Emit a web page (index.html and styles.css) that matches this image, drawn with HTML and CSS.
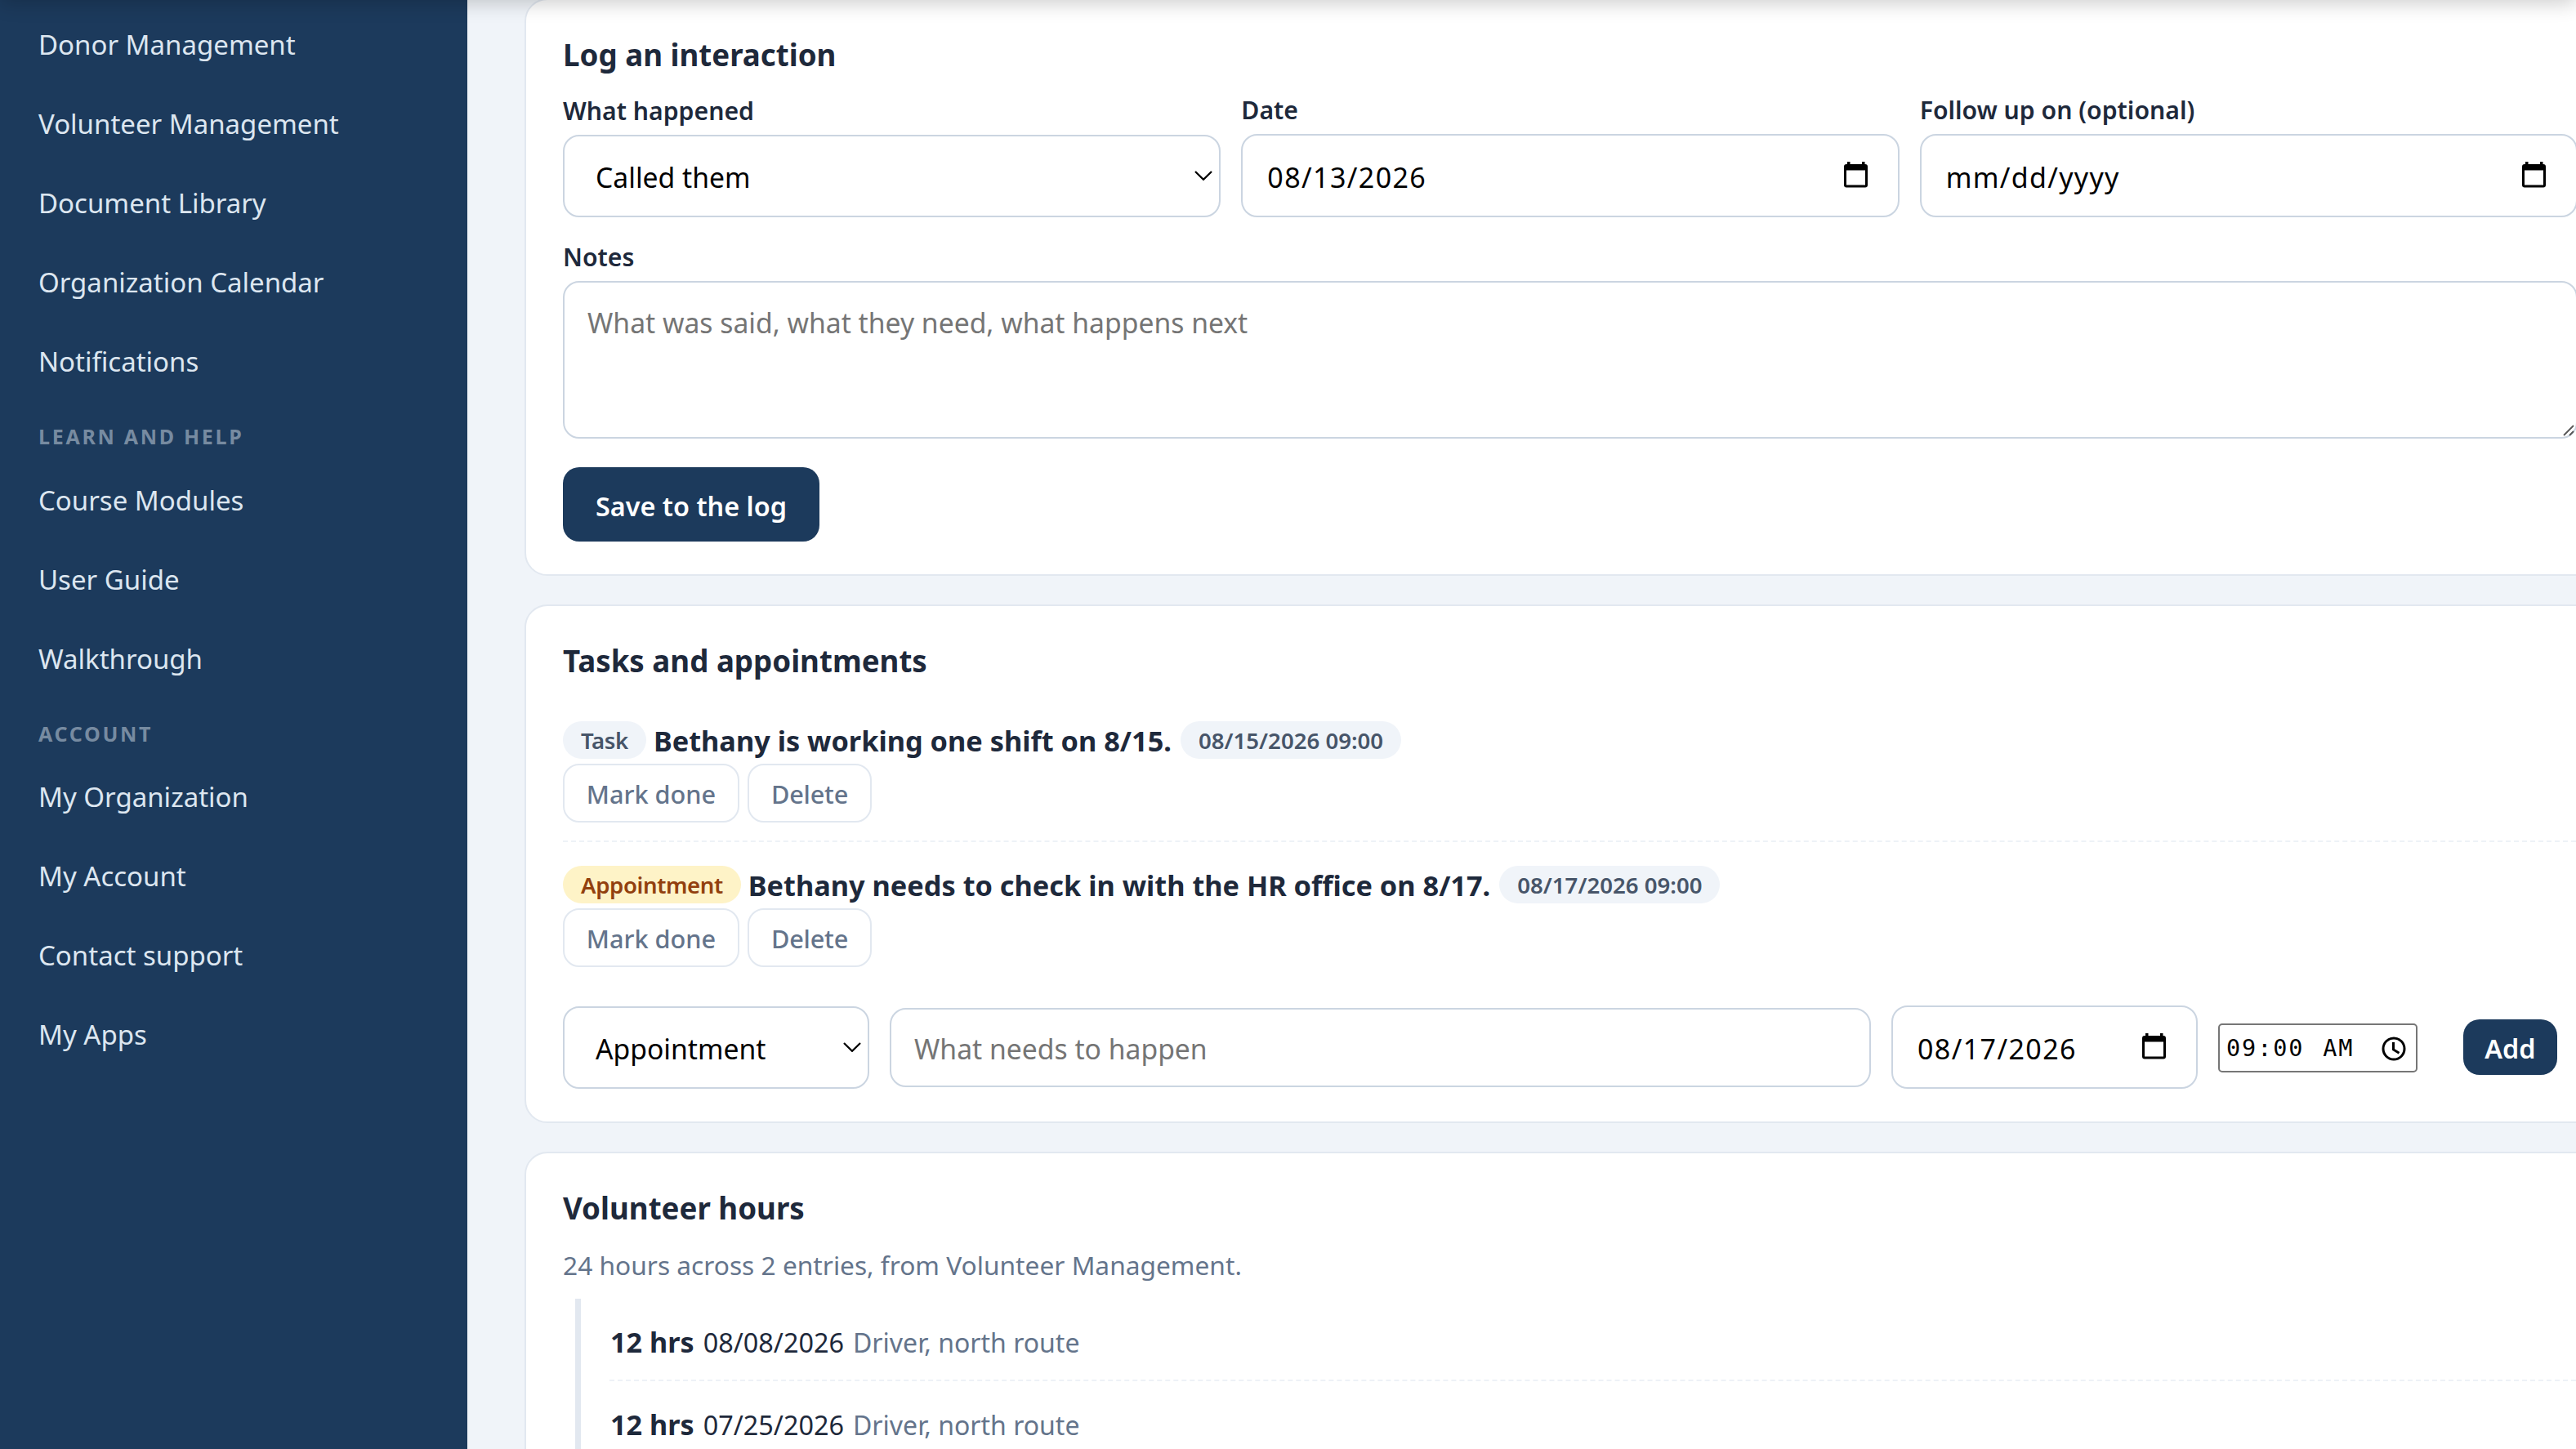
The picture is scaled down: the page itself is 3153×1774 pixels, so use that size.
FILE: index.html
```html
<!DOCTYPE html>
<html lang="en">
<head>
    <meta charset="UTF-8">
    <meta name="viewport" content="width=device-width, initial-scale=1.0">
    <title>Donor Record</title>
    <link rel="stylesheet" href="styles.css">
</head>
<body>
    <div class="topbar"></div>

    <!-- Shared icons -->
    <svg class="sprite">
        <symbol id="calendar" viewBox="0 0 29 32">
            <path d="M4 0h3.500v3H4zM22 0h3.500v3H22z"/>
            <path fill-rule="evenodd" d="M3 3h23a3 3 0 0 1 3 3v22.500a3 3 0 0 1-3 3H3a3 3 0 0 1-3-3V6a3 3 0 0 1 3-3zM3 10.500V28.500H26V10.500z"/>
        </symbol>
        <symbol id="chevron" viewBox="0 0 22 12">
            <path d="M1 1l10 9.800L21 1" fill="none" stroke="#000" stroke-width="2.300"/>
        </symbol>
    </svg>

    <div class="layout">
        <nav class="sidebar">
            <a>Donor Management</a>
            <a>Volunteer Management</a>
            <a>Document Library</a>
            <a>Organization Calendar</a>
            <a>Notifications</a>
            <div class="nav-section">LEARN AND HELP</div>
            <a>Course Modules</a>
            <a>User Guide</a>
            <a>Walkthrough</a>
            <div class="nav-section">ACCOUNT</div>
            <a>My Organization</a>
            <a>My Account</a>
            <a>Contact support</a>
            <a>My Apps</a>
        </nav>

        <main class="content">
            <!-- Log an interaction -->
            <section class="card">
                <h2>Log an interaction</h2>
                <div class="form-grid">
                    <div>
                        <label>What happened</label>
                        <div class="field select">Called them<svg class="chevron"><use href="#chevron"/></svg></div>
                    </div>
                    <div>
                        <label>Date</label>
                        <div class="field date"><span>08/13/2026</span><svg class="calendar"><use href="#calendar"/></svg></div>
                    </div>
                    <div>
                        <label>Follow up on (optional)</label>
                        <div class="field date"><span class="empty">mm/dd/yyyy</span><svg class="calendar"><use href="#calendar"/></svg></div>
                    </div>
                </div>
                <label for="notes">Notes</label>
                <div class="notes">
                    <textarea id="notes" placeholder="What was said, what they need, what happens next"></textarea>
                    <svg class="grip" viewBox="0 0 14 14"><path d="M1 13L13 1M8 13l5-5" stroke="#555" stroke-width="1.800"/></svg>
                </div>
                <button class="btn btn-save">Save to the log</button>
            </section>

            <!-- Tasks and appointments -->
            <section class="card">
                <h2>Tasks and appointments</h2>
                <div class="task">
                    <div class="task-line">
                        <span class="badge badge-type">Task</span>
                        <strong>Bethany is working one shift on 8/15.</strong>
                        <span class="badge">08/15/2026 09:00</span>
                    </div>
                    <div class="task-actions">
                        <button class="btn-ghost">Mark done</button>
                        <button class="btn-ghost">Delete</button>
                    </div>
                </div>
                <div class="task">
                    <div class="task-line">
                        <span class="badge badge-type badge-appt">Appointment</span>
                        <strong>Bethany needs to check in with the HR office on 8/17.</strong>
                        <span class="badge">08/17/2026 09:00</span>
                    </div>
                    <div class="task-actions">
                        <button class="btn-ghost">Mark done</button>
                        <button class="btn-ghost">Delete</button>
                    </div>
                </div>
                <div class="add-row">
                    <div class="field select">Appointment<svg class="chevron"><use href="#chevron"/></svg></div>
                    <input type="text" placeholder="What needs to happen">
                    <div class="field date"><span>08/17/2026</span><svg class="calendar"><use href="#calendar"/></svg></div>
                    <div class="time">
                        <span>09</span>:<span>00</span><span class="ampm">AM</span>
                        <svg class="clock" viewBox="0 0 30 30"><circle cx="15" cy="15" r="13"/><path d="M14.500 7v9l7 4.300"/></svg>
                    </div>
                    <button class="btn btn-add">Add</button>
                </div>
            </section>

            <!-- Volunteer hours -->
            <section class="card">
                <h2>Volunteer hours</h2>
                <p class="muted">24 hours across 2 entries, from Volunteer Management.</p>
                <div class="timeline">
                    <div class="entry"><strong>12 hrs</strong><span>08/08/2026</span><span class="role">Driver, north route</span></div>
                    <div class="entry"><strong>12 hrs</strong><span>07/25/2026</span><span class="role">Driver, north route</span></div>
                </div>
            </section>
        </main>
    </div>
</body>
</html>
```
FILE: styles.css
```css
* {
    box-sizing: border-box;
}

html, body {
    height: 100%;
}

body {
    margin: 0;
    overflow: hidden;
    font-family: "Noto Sans", "Open Sans", sans-serif;
    font-size: 33.6px;
    color: #1e293b;
    background-color: #f0f4f9;
}

.topbar {
    position: fixed;
    top: -60px;
    left: 0;
    right: 0;
    height: 60px;
    box-shadow: 0 4px 24px rgba(0, 0, 0, 0.2);
    z-index: 10;
}

.sprite {
    position: absolute;
    width: 0;
    height: 0;
}

.layout {
    display: flex;
    height: 1774px;
    overflow: hidden;
}

/* Sidebar */
.sidebar {
    flex: 0 0 572px;
    padding-top: 6px;
    background-color: #1c3a5c;
}

.sidebar a {
    display: block;
    padding-left: 47px;
    font-size: 33px;
    line-height: 97px;
    color: #dce6f0;
}

.nav-section {
    height: 72.5px;
    padding: 15px 0 0 47px;
    font-size: 25px;
    font-weight: 700;
    line-height: 56px;
    letter-spacing: 2.7px;
    color: #778ba1;
}

/* Cards */
.content {
    flex: none;
    width: 2560px;
    margin-top: -2px;
    padding-left: 70px;
}

.card {
    width: 2558px;
    margin-bottom: 35px;
    padding: 42px 45px 40px;
    background-color: #ffffff;
    border: 2px solid #e2e8f0;
    border-radius: 28px;
}

h2 {
    margin: 0;
    font-size: 36.7px;
    line-height: 50px;
}

label {
    display: block;
    margin-bottom: 9px;
    font-size: 30.2px;
    font-weight: 600;
    line-height: 40px;
}

.form-grid {
    display: grid;
    grid-template-columns: repeat(3, 1fr);
    gap: 25px;
    align-items: end;
    width: 2466px;
    margin: 23px 0 29px;
}

.field, textarea, input {
    border: 2px solid #cbd5e1;
    border-radius: 20px;
    background-color: #ffffff;
    font-family: inherit;
    font-size: 33.7px;
}

.field {
    display: flex;
    align-items: center;
    justify-content: space-between;
    color: #000000;
}

.select {
    height: 101px;
    padding: 3px 8px 0 38px;
}

.date {
    height: 102px;
    padding: 4px 37px 0 30px;
}

.date span {
    font-size: 34px;
    letter-spacing: 1.4px;
}

.date .empty {
    letter-spacing: 1.3px;
}

.chevron {
    width: 22px;
    height: 12px;
    margin-bottom: 4px;
}

.calendar {
    width: 29px;
    height: 32px;
    margin-bottom: 7px;
}

.notes {
    position: relative;
    width: 2466px;
    height: 193px;
}

textarea {
    width: 100%;
    height: 193px;
    padding: 26px 28px;
    line-height: 46px;
    resize: none;
}

::placeholder {
    color: #757575;
}

.grip {
    position: absolute;
    right: 4px;
    bottom: 3px;
    width: 14px;
    height: 14px;
}

.btn {
    display: block;
    height: 91px;
    padding: 2px 0 0;
    border: none;
    border-radius: 20px;
    background-color: #1c3a5c;
    color: #ffffff;
    font-family: inherit;
    font-size: 32.4px;
    font-weight: 600;
}

.btn-save {
    width: 314px;
    margin-top: 35px;
}

/* Tasks */
h2 + .task {
    margin-top: 20px;
}

.task {
    padding: 29px 0 22px;
}

.task + .task {
    border-top: 2px dashed #eef2f7;
}

.task-line {
    display: flex;
    align-items: center;
    height: 46px;
}

.task-line strong {
    margin: 0 11px 0 9px;
    font-size: 34.3px;
}

.badge {
    padding: 0 22px;
    border-radius: 23px;
    background-color: #f0f4f9;
    color: #475569;
    font-size: 27.6px;
    font-weight: 600;
    line-height: 46px;
}

.badge-type {
    letter-spacing: -0.4px;
}

.badge-appt {
    background-color: #fef3c7;
    color: #92400e;
}

.task-actions {
    display: flex;
    gap: 10px;
    margin-top: 6px;
}

.btn-ghost {
    width: 216px;
    height: 72px;
    padding: 2px 0 0;
    border: 2px solid #e2e8f0;
    border-radius: 20px;
    background-color: #ffffff;
    color: #64748b;
    font-family: inherit;
    font-size: 30.7px;
    font-weight: 500;
}

.btn-ghost + .btn-ghost {
    width: 152px;
    letter-spacing: -0.2px;
}

.add-row {
    display: flex;
    align-items: center;
    gap: 25px;
    width: 2441px;
    margin-top: 25px;
}

.add-row .field {
    width: 375px;
}

.add-row input {
    width: 1201px;
    height: 97px;
    padding: 3px 28px 0;
}

.time {
    display: flex;
    align-items: center;
    width: 244px;
    height: 60px;
    margin-top: 2px;
    padding: 1px 12px 0 8px;
    border: 2px solid #767676;
    border-radius: 5px;
    color: #000000;
    font-family: "DejaVu Sans Mono", monospace;
    font-size: 28.5px;
    letter-spacing: 1.9px;
}

.time .ampm {
    margin-left: 23px;
}

.clock {
    width: 30px;
    height: 30px;
    margin-left: auto;
    fill: none;
    stroke: #000000;
    stroke-width: 3;
}

.btn-add {
    width: 115px;
    height: 68px;
    margin-left: auto;
}

/* Volunteer hours */
.muted {
    margin: 24px 0 20px;
    color: #64748b;
    font-size: 31.7px;
    line-height: 42px;
}

.timeline {
    margin-left: 15px;
    padding-left: 35px;
    border-left: 7px solid #e2e8f0;
}

.entry {
    display: flex;
    align-items: baseline;
    gap: 11px;
    padding: 30px 0 22px 1px;
    border-bottom: 2px dashed #eef2f7;
    font-size: 32.4px;
    line-height: 46px;
}

.entry strong {
    font-size: 34.2px;
}

.role {
    color: #64748b;
    font-size: 32px;
}
```
